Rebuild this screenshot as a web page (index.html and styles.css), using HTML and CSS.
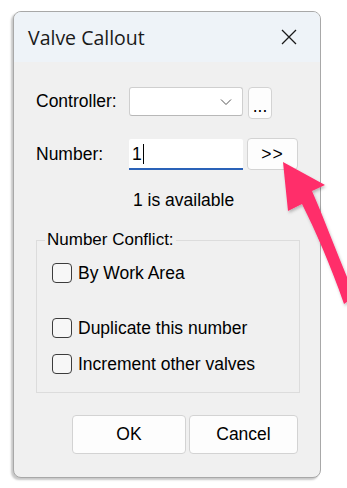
FILE: index.html
```html
<!DOCTYPE html>
<html lang="en">

<head>
    <meta charset="UTF-8">
    <meta name="viewport" content="width=device-width, initial-scale=1.0">
    <title>Valve Callout</title>
    <link rel="stylesheet" href="styles.css">
</head>

<body>
    <div class="dialog">
        <div class="title-bar">
            <span class="title">Valve Callout</span>
            <svg class="close" width="16" height="16" viewBox="0 0 16 16">
                <path d="M1 1 L15 15 M15 1 L1 15" stroke="#1a1a1a" stroke-width="1.3" fill="none" />
            </svg>
        </div>

        <div class="content">
            <div class="row row-controller">
                <label class="field-label">Controller:</label>
                <div class="combo">
                    <svg width="12" height="8" viewBox="0 0 12 8">
                        <path d="M1 1.5 L6 6.5 L11 1.5" stroke="#555" stroke-width="1" fill="none" />
                    </svg>
                </div>
                <button class="btn btn-dots">...</button>
            </div>

            <div class="row row-number">
                <label class="field-label">Number:</label>
                <div class="text-input">1<span class="caret"></span></div>
                <button class="btn btn-next">&gt;&gt;</button>
            </div>

            <div class="available">1 is available</div>

            <fieldset class="group">
                <legend>Number Conflict:</legend>
                <div class="check check-first"><span class="box"></span>By Work Area</div>
                <div class="check check-dup"><span class="box"></span>Duplicate this number</div>
                <div class="check"><span class="box"></span>Increment other valves</div>
            </fieldset>

            <div class="actions">
                <button class="btn btn-ok">OK</button>
                <button class="btn btn-cancel">Cancel</button>
            </div>
        </div>
    </div>

    <!-- annotation arrow pointing at the >> button -->
    <svg class="pointer" width="80" height="160" viewBox="0 0 80 160">
        <defs>
            <filter id="shade" x="-20%" y="-20%" width="140%" height="140%">
                <feDropShadow dx="1" dy="2" stdDeviation="1.5" flood-color="#000" flood-opacity="0.25" />
            </filter>
        </defs>
        <path filter="url(#shade)" fill="#ff2d6a"
            d="M6 4 L48 27 L35 33 C47 60 60 96 78 138 L67 146 C53 106 39 74 25 46 L11 53 Z" />
    </svg>
</body>

</html>
```

FILE: styles.css
```css
body {
    margin: 0;
    background-color: #ffffff;
    font-family: "Liberation Sans", Arial, sans-serif;
    color: #000;
    position: relative;
    width: 347px;
    height: 488px;
    overflow: hidden;
}

.dialog {
    margin: 11px 0 0 13px;
    width: 306px;
    height: 465px;
    border: 1px solid #a8a8a8;
    border-radius: 8px;
    background-color: #f0f0f0;
    box-shadow: -2px 2px 2px rgba(0, 0, 0, 0.22);
    overflow: hidden;
    display: flex;
    flex-direction: column;
}

.title-bar {
    height: 50px;
    background-color: #eef3f8;
    display: flex;
    align-items: center;
    justify-content: space-between;
    padding: 0 23px 0 14px;
}

.title {
    font-family: "Open Sans", "Noto Sans", sans-serif;
    font-size: 19.5px;
    color: #1a1a1a;
}

.content {
    padding: 22px 0 0 22px;
    display: flex;
    flex-direction: column;
}

.row {
    display: flex;
    align-items: center;
}

.field-label {
    width: 93px;
    font-size: 17.5px;
}

.combo {
    height: 27px;
    width: 102px;
    background-color: #ffffff;
    border: 1px solid #cfcfcf;
    border-bottom-color: #b8b8b8;
    border-radius: 3px;
    display: flex;
    align-items: center;
    justify-content: flex-end;
    padding-right: 10px;
}

.btn {
    font-family: "Liberation Sans", Arial, sans-serif;
    font-size: 17.5px;
    color: #000;
    background-color: #fdfdfd;
    border: 1px solid #d3d3d3;
    border-radius: 4px;
    padding: 0;
}

.btn-dots {
    width: 24px;
    height: 32px;
    margin-left: 5px;
    margin-top: 3px;
    padding-top: 6px;
}

.row-number {
    margin-top: 19px;
}

.text-input {
    width: 114px;
    height: 31px;
    box-sizing: border-box;
    background-color: #ffffff;
    border-bottom: 2px solid #2a62b8;
    border-radius: 2px 2px 0 0;
    font-size: 17.5px;
    padding: 5px 0 0 3px;
    display: flex;
    align-items: flex-start;
}

.caret {
    display: inline-block;
    width: 1px;
    height: 20px;
    background-color: #000;
    margin-left: 1px;
}

.btn-next {
    width: 51px;
    height: 32px;
    margin-left: 4px;
    letter-spacing: 1px;
}

.available {
    margin: 20px 0 0 97px;
    font-size: 17.5px;
}

.group {
    margin: 19px 0 0 0;
    width: 264px;
    height: 163px;
    box-sizing: border-box;
    border: 1px solid #dcdcdc;
    padding: 0 0 0 15px;
}

.group legend {
    font-size: 17px;
    padding: 0 2px;
    margin-left: -7px;
}

.check {
    display: flex;
    align-items: center;
    font-size: 17.5px;
    height: 20px;
    margin-top: 16px;
}

.check-first {
    margin-top: 13px;
}

.check-dup {
    margin-top: 35px;
}

.box {
    width: 18px;
    height: 18px;
    border: 1px solid #3c3c3c;
    border-radius: 4px;
    background-color: #f7f7f7;
    margin-right: 6px;
}

.actions {
    display: flex;
    margin: 22px 0 0 36px;
    gap: 3px;
}

.btn-ok {
    width: 114px;
    height: 39px;
}

.btn-cancel {
    width: 109px;
    height: 39px;
}

.pointer {
    position: absolute;
    left: 277px;
    top: 158px;
}
```
